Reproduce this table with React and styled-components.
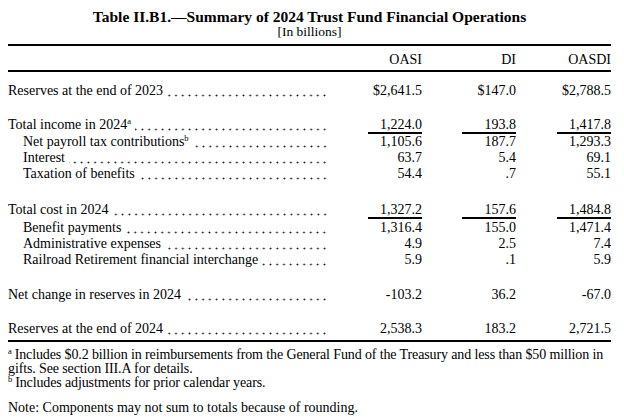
import React from 'react';
import styled, { createGlobalStyle } from 'styled-components';

const GlobalStyle = createGlobalStyle`
    body {
        margin: 0;
        background: #fff;
        color: #000;
        font-family: "Liberation Serif", "Times New Roman", serif;
    }
`;

// space = gap above the row, total = underlined subtotal
const rows = [
    { text: 'Reserves at the end of 2023', values: ['$2,641.5', '$147.0', '$2,788.5'], space: 11 },
    { text: 'Total income in 2024', sup: 'a', values: ['1,224.0', '193.8', '1,417.8'], space: 18, total: true },
    { text: 'Net payroll tax contributions', sup: 'b', values: ['1,105.6', '187.7', '1,293.3'], indent: true },
    { text: 'Interest', values: ['63.7', '5.4', '69.1'], indent: true },
    { text: 'Taxation of benefits', values: ['54.4', '.7', '55.1'], indent: true },
    { text: 'Total cost in 2024', values: ['1,327.2', '157.6', '1,484.8'], space: 20, total: true },
    { text: 'Benefit payments', values: ['1,316.4', '155.0', '1,471.4'], indent: true, space: 1 },
    { text: 'Administrative expenses', values: ['4.9', '2.5', '7.4'], indent: true },
    { text: 'Railroad Retirement financial interchange', values: ['5.9', '.1', '5.9'], indent: true },
    { text: 'Net change in reserves in 2024', values: ['-103.2', '36.2', '-67.0'], space: 19 },
    { text: 'Reserves at the end of 2024', values: ['2,538.3', '183.2', '2,721.5'], space: 18 },
];

export default function App() {
    return (
        <Page>
            <GlobalStyle />
            <Title>Table II.B1.—Summary of 2024 Trust Fund Financial Operations</Title>
            <Subtitle>[In billions]</Subtitle>
            <HeaderRow>
                <span />
                <HeadCell>OASI</HeadCell>
                <HeadCell>DI</HeadCell>
                <HeadCell>OASDI</HeadCell>
            </HeaderRow>
            <Body>
                {rows.map((row, i) => (
                    <Row key={i} space={row.space}>
                        <Label indent={row.indent}>
                            <span>
                                {row.text}
                                {row.sup && <Sup>{row.sup}</Sup>}
                            </span>
                            <Leader />
                        </Label>
                        {row.values.map((v, j) => (
                            <Value key={j} total={row.total}>
                                {v}
                            </Value>
                        ))}
                    </Row>
                ))}
            </Body>
            <Notes>
                <Note>
                    <Mark>a</Mark>Includes $0.2 billion in reimbursements from the General Fund of the Treasury and less than $50 million in gifts. See section III.A for details.
                </Note>
                <Note>
                    <Mark>b</Mark>Includes adjustments for prior calendar years.
                </Note>
                <Remark>Note: Components may not sum to totals because of rounding.</Remark>
            </Notes>
        </Page>
    );
}

const Page = styled.div`
    width: 603px;
    padding: 8px 0 0 8px;
    font-size: 14px;
    line-height: 16px;
`;

const Title = styled.h1`
    margin: 0;
    font-size: 15.5px;
    line-height: 17px;
    font-weight: bold;
    text-align: center;
`;

const Subtitle = styled.div`
    text-align: center;
    font-size: 13.5px;
    line-height: 14px;
`;

const columns = '320px 94px 94px 95px';

const HeaderRow = styled.div`
    display: grid;
    grid-template-columns: ${columns};
    margin-top: 5px;
    border-top: 2px solid #000;
    border-bottom: 2px solid #000;
    padding: 6px 0 2px;
`;

const HeadCell = styled.div`
    text-align: right;
`;

const Body = styled.div`
    border-bottom: 2px solid #000;
    padding-bottom: 3px;
`;

const Row = styled.div`
    display: grid;
    grid-template-columns: ${columns};
    align-items: start;
    margin-top: ${p => p.space || 0}px;
`;

const Label = styled.div`
    display: flex;
    padding-left: ${p => (p.indent ? '15px' : '0')};
    white-space: nowrap;
`;

const Leader = styled.span`
    flex: 1;
    height: 16px;
    margin-left: 4px;
    background-image: radial-gradient(circle at 50% 12.5px, #1a1a1a 0.7px, transparent 1.2px);
    background-size: 6.75px 16px;
    background-repeat: repeat-x;
    background-position: right top;
`;

const Value = styled.div`
    justify-self: end;
    text-align: right;
    ${p =>
        p.total &&
        `
        width: 54px;
        line-height: 15px;
        border-bottom: 2px solid #000;
    `}
`;

const Sup = styled.sup`
    font-size: 8.5px;
    line-height: 0;
    vertical-align: 5px;
`;

const Mark = styled(Sup)`
    margin-right: 3px;
`;

const Notes = styled.div`
    padding-top: 6px;
    letter-spacing: -0.12px;
`;

const Note = styled.div`
    line-height: 14px;
`;

const Remark = styled.div`
    margin-top: 10px;
    letter-spacing: 0;
`;
